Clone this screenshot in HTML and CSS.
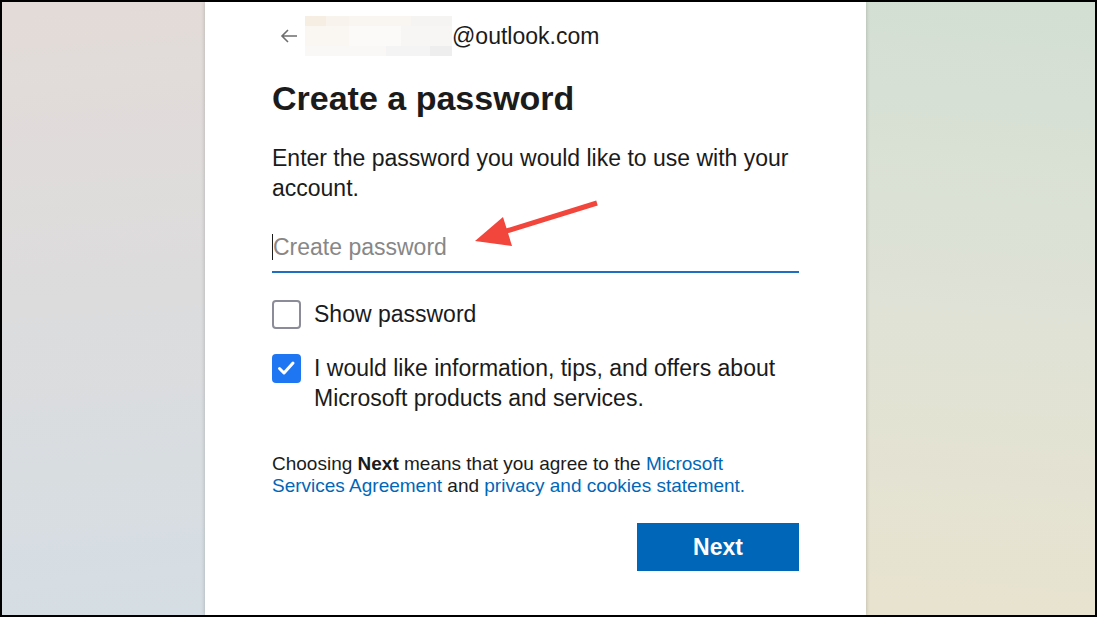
FILE: index.html
```html
<!DOCTYPE html>
<html>
<head>
    <title>Create a password</title>
    <link rel="stylesheet" href="styles.css">
</head>
<body>
    <div class="screen">
        <div class="side side-left"></div>

        <!-- Sign-up card -->
        <div class="card">
            <div class="identity">
                <svg class="back" width="20" height="20" viewBox="0 0 20 20">
                    <path d="M18 10H3M9 4L3 10l6 6" fill="none" stroke="#6e6e6e" stroke-width="1.6"/>
                </svg>
                <div class="mosaic"></div>
                <span class="email">@outlook.com</span>
            </div>

            <h1>Create a password</h1>
            <p class="intro">Enter the password you would like to use with your account.</p>

            <form id="createPassword">
                <div class="field">
                    <input type="password" id="password" name="password" placeholder="Create password" autofocus>
                </div>

                <label class="check">
                    <span class="box"></span>
                    <span>Show password</span>
                </label>

                <label class="check">
                    <span class="box checked">
                        <svg width="28" height="28" viewBox="0 0 28 28">
                            <path d="M7.5 14.5l4.5 4.5 9-10" fill="none" stroke="#fff" stroke-width="3" stroke-linecap="round" stroke-linejoin="round"/>
                        </svg>
                    </span>
                    <span>I would like information, tips, and offers about Microsoft products and services.</span>
                </label>

                <p class="legal">Choosing <b>Next</b> means that you agree to the <a href="#">Microsoft Services Agreement</a> and <a href="#">privacy and cookies statement.</a></p>

                <div class="actions">
                    <button type="submit">Next</button>
                </div>
            </form>
        </div>

        <div class="side side-right"></div>

        <!-- Annotation arrow -->
        <svg class="pointer" width="1097" height="617" viewBox="0 0 1097 617">
            <line x1="597" y1="203" x2="500" y2="233" stroke="#f2453b" stroke-width="5"/>
            <polygon points="475,241 503,217 512,246" fill="#f2453b"/>
        </svg>
    </div>
</body>
</html>
```

FILE: styles.css
```css
* {
    box-sizing: border-box;
}
body {
    margin: 0;
    font-family: "Liberation Sans", Arial, sans-serif;
    color: #1b1b1b;
}
.screen {
    position: relative;
    display: flex;
    width: 1097px;
    height: 617px;
    border: 2px solid #000;
    overflow: hidden;
}
.side {
    height: 100%;
}
.side-left {
    width: 203px;
    background: linear-gradient(175deg, #e3dbd8 0%, #dcdcdd 50%, #d5dee4 100%);
}
.side-right {
    flex: 1;
    background: linear-gradient(185deg, #d3dfd3 0%, #dfe2d6 50%, #e8e3cf 100%);
}
.card {
    position: relative;
    z-index: 1;
    width: 661px;
    height: 100%;
    padding: 14px 67px 0;
    background: #fff;
    box-shadow: 0 0 4px rgba(0, 0, 0, 0.22);
}
.identity {
    display: flex;
    align-items: center;
    height: 40px;
}
.back {
    margin-left: 7px;
    margin-right: 6px;
}
.mosaic {
    width: 147px;
    height: 40px;
    background:
        linear-gradient(90deg, #f6eee3 0 14%, #f8f3ec 14% 30%, #f9f6f2 30% 72%, #f6f4f2 72% 100%) top / 100% 10px no-repeat,
        linear-gradient(90deg, #faf7f3 0 30%, #fbfaf9 30% 65%, #f7f6f5 65% 100%) 0 10px / 100% 20px no-repeat,
        linear-gradient(90deg, #f9f8f7 0 55%, #f5f4f4 55% 85%, #efeeee 85% 100%) 0 30px / 100% 10px no-repeat;
}
.email {
    font-size: 23px;
}
h1 {
    margin: 22px 0 0;
    font-size: 34px;
    line-height: 40px;
    font-weight: bold;
}
.intro {
    margin: 25px 0 0;
    font-size: 23px;
    line-height: 30px;
}
.field {
    position: relative;
    margin-top: 26px;
}
/* text caret of the focused field */
.field::before {
    content: "";
    position: absolute;
    left: 0;
    top: 5px;
    width: 1px;
    height: 26px;
    background: #1b1b1b;
}
input {
    display: block;
    width: 100%;
    height: 44px;
    padding: 0 0 6px 1px;
    border: none;
    border-bottom: 2px solid #1f6fc0;
    outline: none;
    font-family: inherit;
    font-size: 23px;
    color: #1b1b1b;
    caret-color: transparent;
}
input::placeholder {
    color: #878787;
}
.check {
    display: flex;
    align-items: flex-start;
    gap: 13px;
    font-size: 23px;
    line-height: 30px;
    cursor: pointer;
}
.check:first-of-type {
    margin-top: 26px;
}
.check + .check {
    margin-top: 24px;
}
.box {
    flex: none;
    width: 29px;
    height: 29px;
    margin-top: 1px;
    border: 2px solid #8c8c98;
    border-radius: 4px;
}
.box.checked {
    border: none;
    background: #1f76f2;
}
.box svg {
    display: block;
}
.legal {
    margin: 40px 0 0;
    font-size: 19px;
    line-height: 22px;
}
.legal a {
    color: #0067b8;
    text-decoration: none;
}
.actions {
    display: flex;
    justify-content: flex-end;
    margin-top: 26px;
}
button {
    width: 162px;
    height: 48px;
    border: none;
    background-color: #0067b8;
    color: #fff;
    font-family: inherit;
    font-size: 23px;
    font-weight: bold;
    cursor: pointer;
}
.pointer {
    position: absolute;
    top: -2px;
    left: -2px;
    z-index: 2;
    pointer-events: none;
}
```
